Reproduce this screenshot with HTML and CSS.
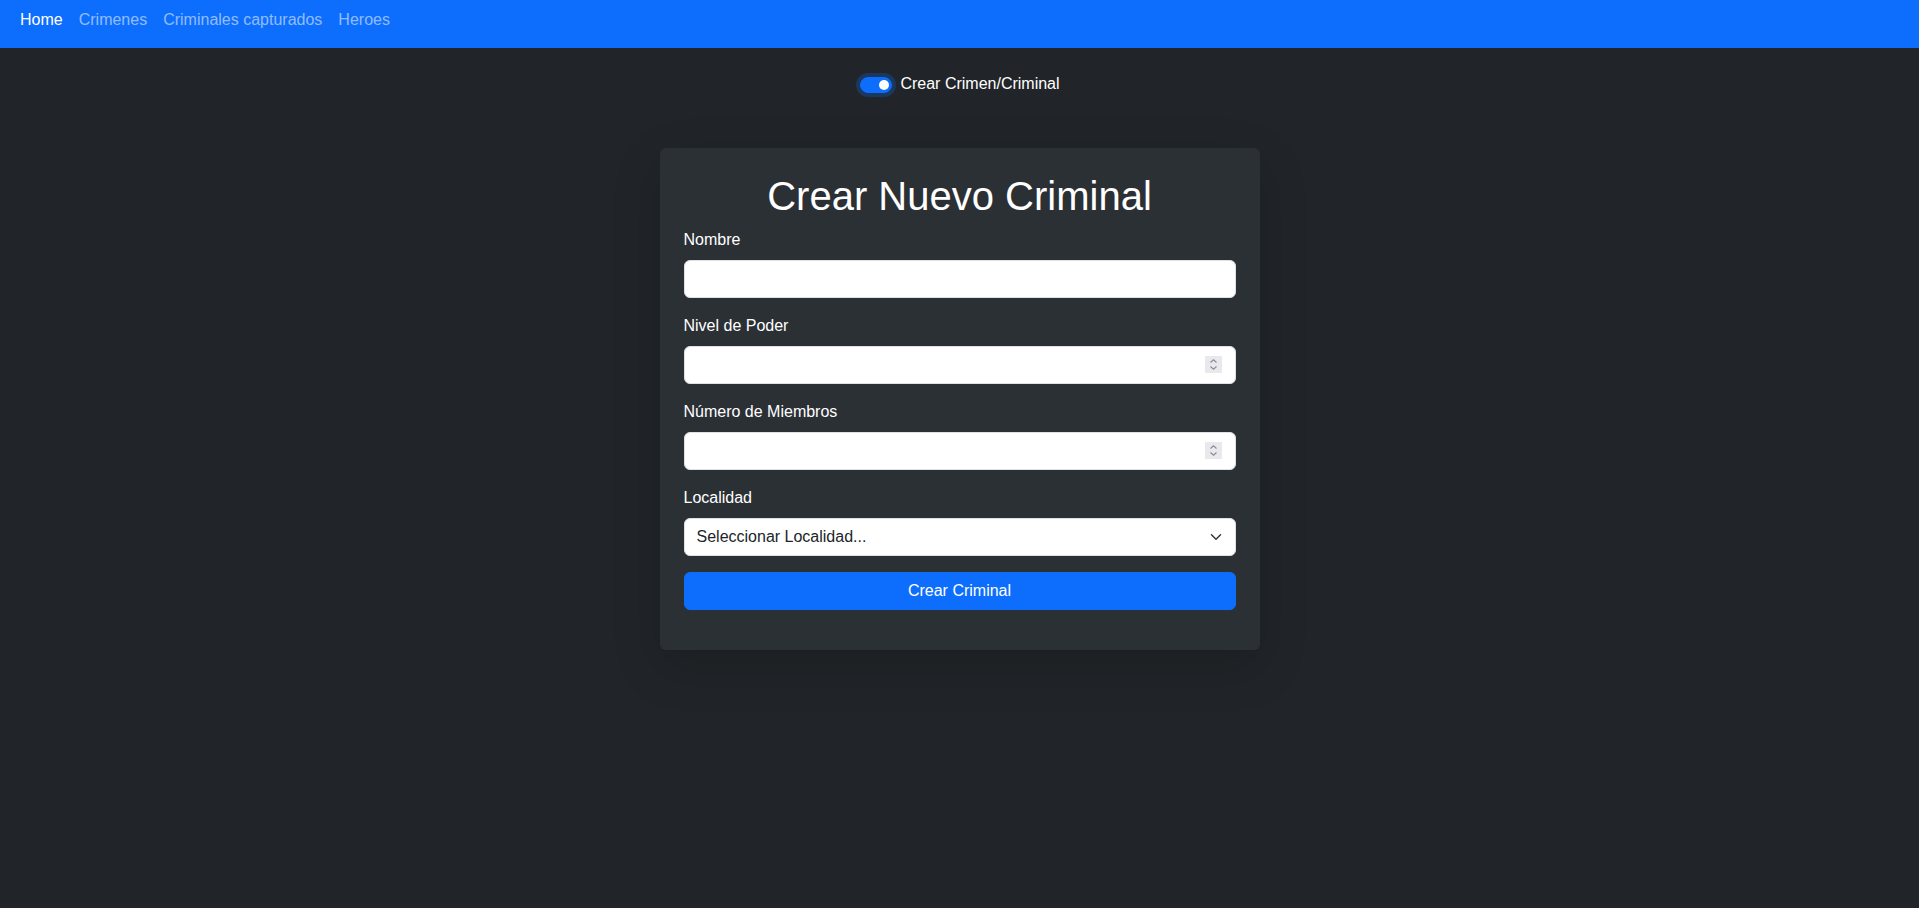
FILE: index.html
```html
<!DOCTYPE html>
<html lang="es">
<head>
<meta charset="utf-8">
<title>Crear Criminal</title>
<link rel="stylesheet" href="styles.css">
</head>
<body>
<nav class="navbar">
  <a class="nav-link active" href="#">Home</a>
  <a class="nav-link" href="#">Crimenes</a>
  <a class="nav-link" href="#">Criminales capturados</a>
  <a class="nav-link" href="#">Heroes</a>
</nav>
<main class="main">
  <div class="switch-row">
    <label class="switch-label">
      <span class="switch"><span class="knob"></span></span>
      <span>Crear Crimen/Criminal</span>
    </label>
  </div>
  <section class="card">
    <h1 class="card-title">Crear Nuevo Criminal</h1>
    <form class="form">
      <div class="group">
        <label class="label" for="nombre">Nombre</label>
        <input class="control" id="nombre" type="text">
      </div>
      <div class="group">
        <label class="label" for="poder">Nivel de Poder</label>
        <div class="field-wrap">
          <input class="control number" id="poder" type="number">
          <svg class="spin" width="17" height="17" viewBox="0 0 17 17" aria-hidden="true"><rect width="17" height="17" fill="#e9e9ed"/><path fill="none" stroke="#8b8b94" stroke-width="1.2" d="M5.5 6.5 8.5 3.8 11.5 6.5M5.5 10.5 8.5 13.2 11.5 10.5"/></svg>
        </div>
      </div>
      <div class="group">
        <label class="label" for="miembros">Número de Miembros</label>
        <div class="field-wrap">
          <input class="control number" id="miembros" type="number">
          <svg class="spin" width="17" height="17" viewBox="0 0 17 17" aria-hidden="true"><rect width="17" height="17" fill="#e9e9ed"/><path fill="none" stroke="#8b8b94" stroke-width="1.2" d="M5.5 6.5 8.5 3.8 11.5 6.5M5.5 10.5 8.5 13.2 11.5 10.5"/></svg>
        </div>
      </div>
      <div class="group">
        <label class="label" for="localidad">Localidad</label>
        <div class="field-wrap">
          <select class="control select" id="localidad">
            <option>Seleccionar Localidad...</option>
          </select>
          <svg class="chevron" width="16" height="12" viewBox="0 0 16 16" aria-hidden="true"><path fill="none" stroke="#343a40" stroke-linecap="round" stroke-linejoin="round" stroke-width="2" d="m2 5 6 6 6-6"/></svg>
        </div>
      </div>
      <button class="btn" type="button">Crear Criminal</button>
    </form>
  </section>
</main>
</body>
</html>
```

FILE: styles.css
```css
* { box-sizing: border-box; }
html, body { margin: 0; }
body {
  background: #212529;
  color: #dee2e6;
  font-family: "Liberation Sans", Arial, sans-serif;
  font-size: 16px;
  line-height: 1.5;
  min-height: 908px;
}
.navbar {
  display: flex;
  align-items: flex-start;
  height: 48px;
  padding: 8px 12px 0;
  background: #0d6efd;
}
.nav-link {
  padding: 0 8px;
  color: rgba(255, 255, 255, 0.55);
  text-decoration: none;
  line-height: 24px;
}
.nav-link.active { color: #fff; }
.main {
  display: flex;
  flex-direction: column;
  align-items: center;
}
.switch-row {
  margin-top: 24px;
  display: flex;
  justify-content: center;
}
.switch-label {
  display: flex;
  align-items: center;
  gap: 8px;
  color: #fff;
  line-height: 24px;
  padding-left: 1px;
}
.switch {
  display: flex;
  align-items: center;
  justify-content: flex-end;
  width: 32px;
  height: 16px;
  border-radius: 8px;
  background: #0d6efd;
  border: 1px solid #0d6efd;
  box-shadow: 0 0 0 4px rgba(13, 110, 253, 0.25);
  padding: 2px;
  margin-top: 1px;
}
.knob {
  width: 10px;
  height: 10px;
  border-radius: 50%;
  background: #fff;
}
.card {
  margin-top: 52px;
  width: 600px;
  padding: 24px 24px 24px;
  background: #2b3035;
  border-radius: 6px;
  box-shadow: 0 16px 48px rgba(0, 0, 0, 0.175);
}
.card-title {
  margin: 0 0 8px;
  text-align: center;
  font-size: 40px;
  font-weight: 400;
  line-height: 1.2;
  color: #fff;
}
.group { margin-bottom: 16px; }
.label {
  display: block;
  margin-bottom: 8px;
  color: #fff;
}
.control {
  display: block;
  width: 100%;
  height: 38px;
  padding: 6px 12px;
  font-family: inherit;
  font-size: 16px;
  line-height: 1.5;
  color: #212529;
  background: #fff;
  border: 1px solid #dee2e6;
  border-radius: 6px;
  outline: none;
}
.number {
  appearance: textfield;
  -moz-appearance: textfield;
  padding-right: 40px;
}
.number::-webkit-inner-spin-button,
.number::-webkit-outer-spin-button {
  -webkit-appearance: none;
  margin: 0;
}
.field-wrap { position: relative; }
.spin {
  position: absolute;
  right: 14px;
  top: 10px;
  pointer-events: none;
}
.select {
  appearance: none;
  -webkit-appearance: none;
  padding-right: 36px;
}
.chevron {
  position: absolute;
  right: 12px;
  top: 13px;
  pointer-events: none;
}
.btn {
  display: block;
  width: 100%;
  height: 38px;
  margin-bottom: 16px;
  padding: 6px 12px;
  font-family: inherit;
  font-size: 16px;
  line-height: 1.5;
  color: #fff;
  background: #0d6efd;
  border: 1px solid #0d6efd;
  border-radius: 6px;
}
```
